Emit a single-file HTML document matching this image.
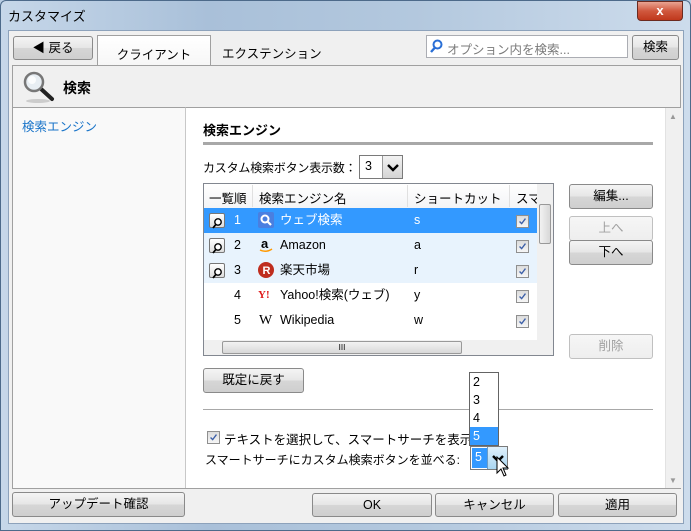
<!DOCTYPE html>
<html><head><meta charset="utf-8"><style>
*{box-sizing:border-box;margin:0;padding:0}
body{width:691px;height:531px;overflow:hidden;font-family:"Liberation Sans","Noto Sans CJK JP",sans-serif;font-size:12.5px;color:#000;background:#b9cde3;position:relative}
.a{position:absolute}
.btn{position:absolute;border:1px solid #8a8a8a;border-radius:3px;background:linear-gradient(#f4f4f4,#e6e6e6 50%,#d6d6d6 51%,#cfcfcf);display:flex;align-items:center;justify-content:center;font-size:12.5px;line-height:1}
.dis{color:#a0a0a0;border-color:#c0c0c0;background:linear-gradient(#f6f6f6,#eeeeee)}
.row{position:absolute;left:204px;width:333px;height:25px;line-height:25px}
.row span{position:absolute;top:0}
.cb{position:absolute;width:13px;height:13px;border:1px solid #8f8f8f;background:linear-gradient(#dcdcdc,#f6f6f6)}
.mg{position:absolute;left:5px;top:5px;width:16px;height:15px;border:1px solid #777;border-radius:2px;background:linear-gradient(#fff,#ddd)}
.ic{position:absolute;left:54px;top:4px;width:16px;height:16px}
</style></head><body>
<svg width="0" height="0" style="position:absolute"><defs>
<symbol id="chk" viewBox="0 0 13 13"><path d="M3 6.5 L5.5 9 L10 3" fill="none" stroke="#3c5fa8" stroke-width="1.6"/></symbol>
<symbol id="mag" viewBox="0 0 14 13"><circle cx="8" cy="5" r="3.2" fill="#fff" stroke="#000" stroke-width="1.4"/><line x1="5.8" y1="7.5" x2="3" y2="11" stroke="#000" stroke-width="1.8"/></symbol>
<symbol id="chev" viewBox="0 0 20 22"><path d="M5 9 L10 14 L15 9" fill="none" stroke="#000" stroke-width="2.4"/></symbol>
</defs></svg>
<div class="a" style="left:0;top:0;width:691px;height:531px;background:linear-gradient(90deg,#c6d7e9,#a9c0d9 30%,#b3c8de 60%,#cddcec);border:1px solid #4d6a8a;border-radius:6px 6px 0 0"></div>
<div class="a" style="left:8px;top:6px;font-size:13px">カスタマイズ</div>
<div class="a" style="left:637px;top:1px;width:46px;height:20px;border:1px solid #6b2a1f;border-radius:0 0 4px 4px;background:linear-gradient(#e8a493,#d0583e 50%,#c0381c);color:#fff;font-weight:bold;text-align:center;line-height:18px;font-size:13px">x</div>
<div class="a" style="left:8px;top:30px;width:676px;height:494px;background:#f0f0f0;border:1px solid #8da2bb"></div>
<div class="btn" style="left:13px;top:36px;width:80px;height:24px">◀ 戻る</div>
<div class="a" style="left:97px;top:35px;width:114px;height:32px;background:linear-gradient(#fff,#f6f6f6);border:1px solid #a0a0a0;border-bottom:none;text-align:center;padding-top:8px">クライアント</div>
<div class="a" style="left:222px;top:43px">エクステンション</div>
<div class="a" style="left:426px;top:35px;width:202px;height:23px;background:#fff;border:1px solid #abadb3;color:#7a7a7a;padding:3px 0 0 20px">オプション内を検索...</div>
<svg class="a" style="left:429px;top:39px" width="14" height="15" viewBox="0 0 14 15"><circle cx="8.5" cy="5.5" r="4" fill="none" stroke="#2a6fd6" stroke-width="2"/><line x1="6" y1="8.5" x2="2" y2="13" stroke="#2a6fd6" stroke-width="2.4"/></svg>
<div class="btn" style="left:632px;top:35px;width:47px;height:25px">検索</div>
<div class="a" style="left:12px;top:65px;width:669px;height:424px;border:1px solid #a0a0a0;background:#f0f0f0"></div>
<svg class="a" style="left:22px;top:70px" width="36" height="34" viewBox="0 0 36 34"><ellipse cx="16" cy="31" rx="12" ry="2" fill="#ccc"/><line x1="18" y1="18" x2="30" y2="29" stroke="#222" stroke-width="4" stroke-linecap="round"/><circle cx="12" cy="12" r="9" fill="#e8eef3" stroke="#777" stroke-width="2.5"/><circle cx="10" cy="10" r="4" fill="#fff" opacity=".8"/></svg>
<div class="a" style="left:63px;top:78px;font-size:14px;font-weight:bold">検索</div>
<div class="a" style="left:13px;top:107px;width:172px;height:381px;background:#f9f9f9;border-top:1px solid #a0a0a0"></div>
<div class="a" style="left:22px;top:116px;color:#1b75c9">検索エンジン</div>
<div class="a" style="left:185px;top:107px;width:496px;height:381px;background:#fff;border-top:1px solid #a0a0a0;border-left:1px solid #c8c8c8"></div>
<div class="a" style="left:665px;top:108px;width:16px;height:380px;background:#f0f0f0;border-left:1px solid #e2e2e2"></div>
<div class="a" style="left:669px;top:112px;font-size:8px;color:#999">▲</div>
<div class="a" style="left:669px;top:476px;font-size:8px;color:#999">▼</div>
<div class="a" style="left:203px;top:120px;font-size:13px;font-weight:bold">検索エンジン</div>
<div class="a" style="left:203px;top:142px;width:450px;height:3px;background:#a8a8a8"></div>
<div class="a" style="left:203px;top:159px;font-size:12px;letter-spacing:-0.2px">カスタム検索ボタン表示数：</div>
<div class="a" style="left:359px;top:155px;width:44px;height:24px;border:1px solid #7a7a7a;background:#fff;padding:3px 0 0 5px">3</div>
<div class="a" style="left:382px;top:156px;width:20px;height:22px;background:linear-gradient(#f2f2f2,#d4d4d4);border-left:1px solid #999"><svg width="20" height="22"><use href="#chev"/></svg></div>
<div class="a" style="left:203px;top:183px;width:351px;height:173px;border:1px solid #828790;background:#fff"></div>
<div class="a" style="left:204px;top:184px;width:333px;height:24px;background:linear-gradient(#fff,#f3f4f6)"></div>
<div class="a" style="left:209px;top:188px">一覧順</div>
<div class="a" style="left:252px;top:185px;width:1px;height:22px;background:#e0e0e0"></div>
<div class="a" style="left:259px;top:188px">検索エンジン名</div>
<div class="a" style="left:407px;top:185px;width:1px;height:22px;background:#e0e0e0"></div>
<div class="a" style="left:414px;top:188px">ショートカット</div>
<div class="a" style="left:509px;top:185px;width:1px;height:22px;background:#e0e0e0"></div>
<div class="a" style="left:516px;top:188px">スマ</div>
<div class="row" style="top:208px;background:#3399ff;color:#fff"><div class="mg"><svg width="14" height="13"><use href="#mag"/></svg></div><span style="left:30px">1</span><svg class="ic" viewBox="0 0 16 16"><rect width="16" height="16" rx="2" fill="#4a7fe0"/><circle cx="7" cy="7" r="3.5" fill="none" stroke="#fff" stroke-width="2"/><line x1="9.5" y1="9.5" x2="13" y2="13" stroke="#fff" stroke-width="2.2"/></svg><span style="left:76px">ウェブ検索</span><span style="left:210px">s</span></div>
<div class="row" style="top:233px;background:#e8f3fd"><div class="mg"><svg width="14" height="13"><use href="#mag"/></svg></div><span style="left:30px">2</span><svg class="ic" viewBox="0 0 16 16"><text x="3" y="11" font-size="13" font-weight="bold" font-family="Liberation Sans">a</text><path d="M2 13 Q8 16 14 12" fill="none" stroke="#f90" stroke-width="1.5"/></svg><span style="left:76px">Amazon</span><span style="left:210px">a</span></div>
<div class="row" style="top:258px;background:#e8f3fd"><div class="mg"><svg width="14" height="13"><use href="#mag"/></svg></div><span style="left:30px">3</span><svg class="ic" viewBox="0 0 16 16"><circle cx="8" cy="8" r="8" fill="#bf2d1e"/><text x="4.5" y="12" font-size="11" font-weight="bold" fill="#fff" font-family="Liberation Sans">R</text></svg><span style="left:76px">楽天市場</span><span style="left:210px">r</span></div>
<div class="row" style="top:283px"><span style="left:30px">4</span><span style="left:54px;color:#e01b1b;font-weight:bold;font-size:11px;font-family:'Liberation Serif',serif">Y!</span><span style="left:76px">Yahoo!検索(ウェブ)</span><span style="left:210px">y</span></div>
<div class="row" style="top:308px"><span style="left:55px;font-family:'Liberation Serif',serif;font-size:14px">W</span><span style="left:30px">5</span><span style="left:76px">Wikipedia</span><span style="left:210px">w</span></div>
<div class="cb" style="left:516px;top:215px"><svg width="11" height="11" viewBox="0 0 13 13"><use href="#chk"/></svg></div>
<div class="cb" style="left:516px;top:240px"><svg width="11" height="11" viewBox="0 0 13 13"><use href="#chk"/></svg></div>
<div class="cb" style="left:516px;top:265px"><svg width="11" height="11" viewBox="0 0 13 13"><use href="#chk"/></svg></div>
<div class="cb" style="left:516px;top:290px"><svg width="11" height="11" viewBox="0 0 13 13"><use href="#chk"/></svg></div>
<div class="cb" style="left:516px;top:315px"><svg width="11" height="11" viewBox="0 0 13 13"><use href="#chk"/></svg></div>
<div class="a" style="left:537px;top:184px;width:16px;height:156px;background:#f0f0f0"></div>
<div class="a" style="left:539px;top:204px;width:12px;height:40px;border:1px solid #999;border-radius:2px;background:linear-gradient(90deg,#f2f2f2,#d8d8d8)"></div>
<div class="a" style="left:204px;top:340px;width:349px;height:15px;background:#f0f0f0"></div>
<div class="a" style="left:222px;top:341px;width:240px;height:13px;border:1px solid #999;border-radius:2px;background:linear-gradient(#f2f2f2,#d8d8d8);font-size:8px;text-align:center;line-height:11px">III</div>
<div class="btn" style="left:569px;top:184px;width:84px;height:25px">編集...</div>
<div class="btn dis" style="left:569px;top:216px;width:84px;height:25px">上へ</div>
<div class="btn" style="left:569px;top:240px;width:84px;height:25px">下へ</div>
<div class="btn dis" style="left:569px;top:334px;width:84px;height:25px">削除</div>
<div class="btn" style="left:203px;top:368px;width:101px;height:25px">既定に戻す</div>
<div class="a" style="left:203px;top:409px;width:450px;height:1px;background:#a8a8a8"></div>
<div class="cb" style="left:207px;top:431px"><svg width="11" height="11" viewBox="0 0 13 13"><use href="#chk"/></svg></div>
<div class="a" style="left:224px;top:429px">テキストを選択して、スマートサーチを表示す</div>
<div class="a" style="left:205px;top:451px;font-size:12px">スマートサーチにカスタム検索ボタンを並べる:</div>
<div class="a" style="left:470px;top:446px;width:38px;height:24px;border:1px solid #7a7a7a;background:#fff"></div>
<div class="a" style="left:472px;top:448px;width:15px;height:20px;background:#3399ff;color:#fff;padding:2px 0 0 3px">5</div>
<div class="a" style="left:487px;top:447px;width:20px;height:22px;background:linear-gradient(#dff0fb,#a9d6f2);border-left:1px solid #6c9cc6"><svg width="20" height="22"><use href="#chev"/></svg></div>
<svg class="a" style="left:496px;top:456px" width="14" height="22" viewBox="0 0 14 22"><path d="M1 1 L1 17 L5 13 L8 20 L10 19 L7 12 L12 12 Z" fill="#fff" stroke="#000" stroke-width="1"/></svg>
<div class="a" style="left:469px;top:372px;width:30px;height:74px;border:1px solid #646464;background:#fff;line-height:18px">
<div style="padding-left:3px">2</div><div style="padding-left:3px">3</div><div style="padding-left:3px">4</div><div style="padding-left:3px;background:#3399ff;color:#fff">5</div></div>
<div class="btn" style="left:12px;top:492px;width:173px;height:25px">アップデート確認</div>
<div class="btn" style="left:312px;top:493px;width:120px;height:24px">OK</div>
<div class="btn" style="left:435px;top:493px;width:119px;height:24px">キャンセル</div>
<div class="btn" style="left:558px;top:493px;width:119px;height:24px">適用</div>
</body></html>
